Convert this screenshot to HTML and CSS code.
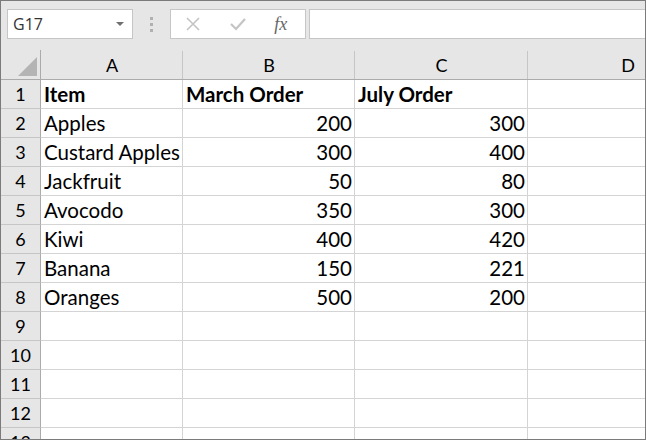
FILE: index.html
```html
<!DOCTYPE html>
<html lang="en">
<head>
  <meta charset="UTF-8" />
  <title>Book1 - Excel</title>
  <link rel="stylesheet" href="styles.css">
</head>
<body>
  <div id="app">
    <div class="toolbar">
      <div class="nameBox">
        <span>G17</span>
        <span class="caret"></span>
      </div>
      <div class="grip"><i></i><i></i><i></i></div>
      <div class="fxButtons">
        <svg class="btnIcon" width="14" height="14" viewBox="0 0 14 14">
          <path d="M1 1 L13 13 M13 1 L1 13" stroke="#c4c4c4" stroke-width="1.6" fill="none"/>
        </svg>
        <svg class="btnIcon" width="16" height="14" viewBox="0 0 16 14">
          <path d="M1 7 L6 12 L15 2" stroke="#c4c4c4" stroke-width="2.2" fill="none"/>
        </svg>
        <span class="fx">fx</span>
      </div>
      <div class="formulaInput"></div>
    </div>

    <div class="sheet" id="sheet"></div>
  </div>

  <script>
    const rows = [
      ["Item", "March Order", "July Order"],
      ["Apples", 200, 300],
      ["Custard Apples", 300, 400],
      ["Jackfruit", 50, 80],
      ["Avocodo", 350, 300],
      ["Kiwi", 400, 420],
      ["Banana", 150, 221],
      ["Oranges", 500, 200]
    ];

    const sheet = document.getElementById('sheet');

    function cell(cls, text) {
      const div = document.createElement('div');
      div.className = cls;
      if (text !== undefined) div.textContent = text;
      sheet.appendChild(div);
    }

    // column headers
    cell('corner');
    ['A', 'B', 'C', 'D'].forEach(l => cell('colHead', l));

    for (let r = 1; r <= 13; r++) {
      cell('rowHead', r);
      const data = rows[r - 1] || [];
      for (let c = 0; c < 4; c++) {
        const v = data[c];
        let cls = 'cell';
        if (r === 1 && v !== undefined) cls += ' bold';
        if (typeof v === 'number') cls += ' num';
        cell(cls, v === undefined ? '' : v);
      }
    }
  </script>
</body>
</html>
```

FILE: styles.css
```css
html, body {
  margin: 0;
  padding: 0;
  background: #fff;
}

#app {
  width: 646px;
  height: 440px;
  box-sizing: border-box;
  border: 1px solid #7b7b7b;
  background: #e6e6e6;
  overflow: hidden;
  display: flex;
  flex-direction: column;
}

.toolbar {
  height: 49px;
  flex-shrink: 0;
  display: flex;
  align-items: flex-start;
  padding: 8px 0 0 6px;
  box-sizing: border-box;
}

.nameBox {
  width: 127px;
  height: 30px;
  box-sizing: border-box;
  background: #fff;
  border: 1px solid #c6c6c6;
  display: flex;
  align-items: center;
  justify-content: space-between;
  padding: 0 8px 0 5px;
  font-family: "Open Sans", sans-serif;
  font-size: 16px;
  color: #333;
}

.caret {
  width: 0;
  height: 0;
  border-left: 4px solid transparent;
  border-right: 4px solid transparent;
  border-top: 4px solid #6f6f6f;
}

.grip {
  width: 38px;
  height: 30px;
  display: flex;
  flex-direction: column;
  align-items: center;
  justify-content: center;
  gap: 3px;
}

.grip i {
  display: block;
  width: 3px;
  height: 3px;
  background: #b0b0b0;
}

.fxButtons {
  width: 137px;
  height: 30px;
  box-sizing: border-box;
  background: #fff;
  border: 1px solid #c6c6c6;
  display: flex;
  align-items: center;
  padding-left: 15px;
  gap: 30px;
}

.fx {
  font-family: "Liberation Serif", serif;
  font-style: italic;
  font-size: 18px;
  color: #666;
  margin-left: -2px;
}

.formulaInput {
  margin-left: 3px;
  width: 340px;
  height: 30px;
  box-sizing: border-box;
  background: #fff;
  border: 1px solid #c6c6c6;
  border-right: none;
}

.sheet {
  flex: 1;
  display: grid;
  grid-template-columns: 40px 142px 172px 173px 200px;
  grid-template-rows: 30px repeat(13, 29px);
  font-family: Lato, "Open Sans", sans-serif;
  color: #000;
  overflow: hidden;
  background: #fff;
}

.corner {
  background: #e6e6e6;
  border-right: 1px solid #ababab;
  border-bottom: 1px solid #ababab;
  position: relative;
}

.corner::after {
  content: "";
  position: absolute;
  right: 3px;
  bottom: 3px;
  width: 0;
  height: 0;
  border-left: 19px solid transparent;
  border-bottom: 19px solid #b4b4b4;
}

.colHead {
  background: #e6e6e6;
  border-bottom: 1px solid #ababab;
  display: flex;
  align-items: flex-end;
  justify-content: center;
  padding-bottom: 2px;
  font-size: 18px;
  position: relative;
}

.colHead::after {
  content: "";
  position: absolute;
  right: 0;
  top: 1px;
  bottom: 0;
  width: 1px;
  background: #c6c6c6;
}

.rowHead {
  background: #e6e6e6;
  border-right: 1px solid #ababab;
  border-bottom: 1px solid #c6c6c6;
  display: flex;
  align-items: flex-end;
  justify-content: center;
  padding-bottom: 2px;
  font-size: 18px;
}

.cell {
  border-right: 1px solid #d4d4d4;
  border-bottom: 1px solid #d4d4d4;
  display: flex;
  align-items: flex-end;
  padding: 0 2px 2px 3px;
  font-size: 20.5px;
  white-space: nowrap;
  overflow: visible;
}

.cell.bold {
  font-weight: bold;
}

.cell.num {
  justify-content: flex-end;
}

.sheet > div {
  box-sizing: border-box;
  line-height: 24px;
}
```
